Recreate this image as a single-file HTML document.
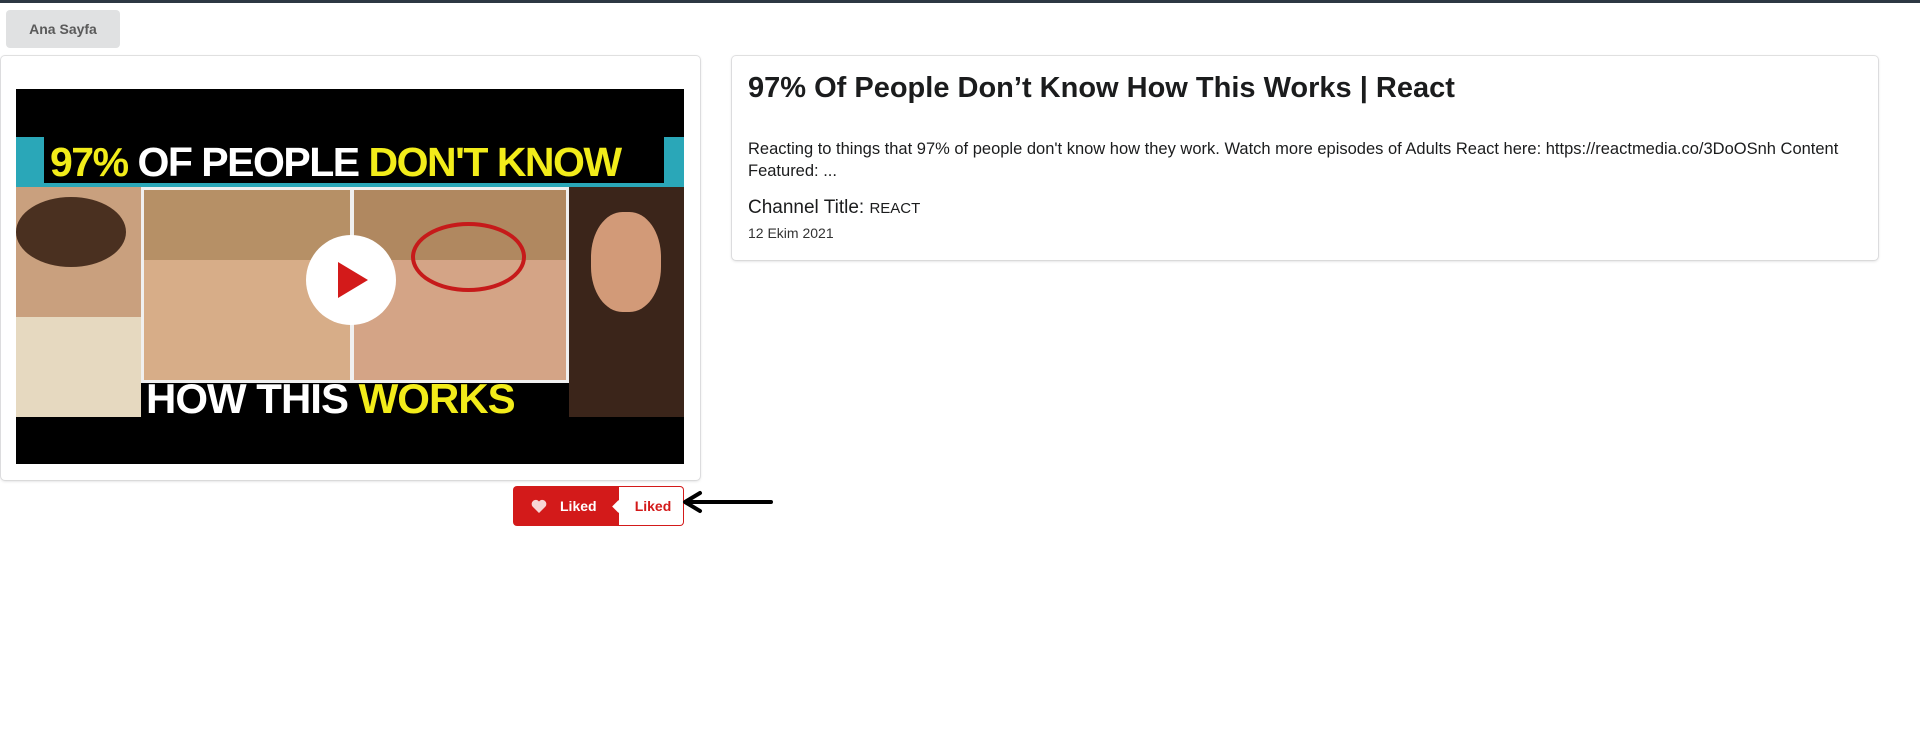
<!DOCTYPE html>
<html><head><meta charset="utf-8">
<style>
*{box-sizing:border-box;margin:0;padding:0}
body{width:1920px;height:754px;background:#fff;font-family:"Liberation Sans",sans-serif;position:relative;overflow:hidden;color:#1b1c1d}
.topbar{position:absolute;left:0;top:0;width:1920px;height:3px;background:#2d3843}
.btn{position:absolute;left:6px;top:10px;width:114px;height:38px;background:#e0e1e2;border-radius:4px;color:#5a5a5a;font-weight:bold;font-size:14px;line-height:38px;text-align:center}
.card{position:absolute;background:#fff;border-radius:4px;box-shadow:0 1px 3px 0 #d4d4d5,0 0 0 1px #e2e2e3}
.video{position:absolute;left:16px;top:89px;width:668px;height:375px;background:#000;overflow:hidden}
.thumb{position:absolute;left:0;top:48px;width:668px;height:280px;background:#2aa7b8}
.like{position:absolute;left:513px;top:486px;width:171px;height:40px}
.like .r{position:absolute;left:0;top:0;width:107px;height:40px;background:#d31a1a;border-radius:4px 0 0 4px;color:#fff;font-weight:bold;font-size:14px;line-height:40px;padding-left:47px}
.like .w{position:absolute;left:106px;top:0;width:65px;height:40px;border:1px solid #d31a1a;border-left:none;border-radius:0 4px 4px 0;color:#d31a1a;font-weight:bold;font-size:14px;line-height:38px;text-align:center;padding-left:4px;background:#fff}
.like .w:before{content:"";position:absolute;left:-5px;top:15px;width:9px;height:9px;background:#fff;transform:rotate(45deg)}
h1{position:absolute;left:748px;top:72px;font-size:29px;font-weight:bold;color:#1b1c1d;white-space:nowrap}
.desc{position:absolute;left:748px;top:138px;width:1105px;font-size:16.5px;line-height:22px;font-weight:500}
.ch{position:absolute;left:748px;top:197px;font-size:19px}
.ch span{font-size:15px}
.date{position:absolute;left:748px;top:225px;font-size:14px;color:#333}
</style></head><body>
<div class="topbar"></div>
<div class="btn">Ana Sayfa</div>
<div class="card" style="left:1px;top:56px;width:699px;height:424px"></div>
<div class="video">
 <div class="thumb">
  <div style="position:absolute;left:0;top:50px;width:130px;height:230px;background:#c9a07e"></div>
  <div style="position:absolute;left:0;top:60px;width:110px;height:70px;background:#4a3020;border-radius:50%"></div>
  <div style="position:absolute;left:0;top:180px;width:125px;height:100px;background:#e6d9c0"></div>
  <div style="position:absolute;left:550px;top:50px;width:118px;height:230px;background:#3b251a"></div>
  <div style="position:absolute;left:575px;top:75px;width:70px;height:100px;background:#d29a78;border-radius:45%"></div>
  <div style="position:absolute;left:125px;top:50px;width:428px;height:196px;background:#f0f0f0"></div>
  <div style="position:absolute;left:128px;top:53px;width:206px;height:190px;background:#d7ad88"></div>
  <div style="position:absolute;left:338px;top:53px;width:212px;height:190px;background:#d4a486"></div>
  <div style="position:absolute;left:128px;top:53px;width:206px;height:70px;background:#b69066"></div>
  <div style="position:absolute;left:338px;top:53px;width:212px;height:70px;background:#b08860"></div>
  <div style="position:absolute;left:395px;top:85px;width:115px;height:70px;border:4px solid #c61a1a;border-radius:50%"></div>
  <div style="position:absolute;left:28px;top:0;width:620px;height:46px;background:#000"></div>
  <div style="position:absolute;left:34px;top:2px;font-size:41px;font-weight:bold;white-space:nowrap;letter-spacing:-1.5px"><span style="color:#f2ec1a">97%</span> <span style="color:#fff">OF PEOPLE</span> <span style="color:#f2ec1a">DON'T KNOW</span></div>
  <div style="position:absolute;left:125px;top:246px;width:428px;height:34px;background:#000"></div>
  <div style="position:absolute;left:130px;top:238px;font-size:42px;font-weight:bold;white-space:nowrap;letter-spacing:-1px"><span style="color:#fff">HOW THIS</span> <span style="color:#f2ec1a">WORKS</span></div>
  <div style="position:absolute;left:290px;top:98px;width:90px;height:90px;background:#fff;border-radius:50%"></div>
  <div style="position:absolute;left:322px;top:125px;width:0;height:0;border-left:30px solid #d31a1a;border-top:18px solid transparent;border-bottom:18px solid transparent"></div>
 </div>
</div>
<div class="like"><div class="r"><svg style="position:absolute;left:18px;top:13px" width="16" height="14" viewBox="0 0 16 14"><path d="M8 14L1.5 7.5A4 4 0 0 1 8 2.5A4 4 0 0 1 14.5 7.5Z" fill="#f7d6d6"/></svg>Liked</div><div class="w">Liked</div></div>
<svg style="position:absolute;left:680px;top:490px" width="95" height="24" viewBox="0 0 95 24"><path d="M91 12H6M20 3L5 12L20 21" stroke="#000" stroke-width="4" fill="none" stroke-linecap="round" stroke-linejoin="round"/></svg>
<div class="card" style="left:732px;top:56px;width:1146px;height:204px"></div>
<h1>97% Of People Don’t Know How This Works | React</h1>
<div class="desc">Reacting to things that 97% of people don't know how they work. Watch more episodes of Adults React here: https://reactmedia.co/3DoOSnh Content Featured: ...</div>
<div class="ch">Channel Title: <span>REACT</span></div>
<div class="date">12 Ekim 2021</div>
</body></html>
